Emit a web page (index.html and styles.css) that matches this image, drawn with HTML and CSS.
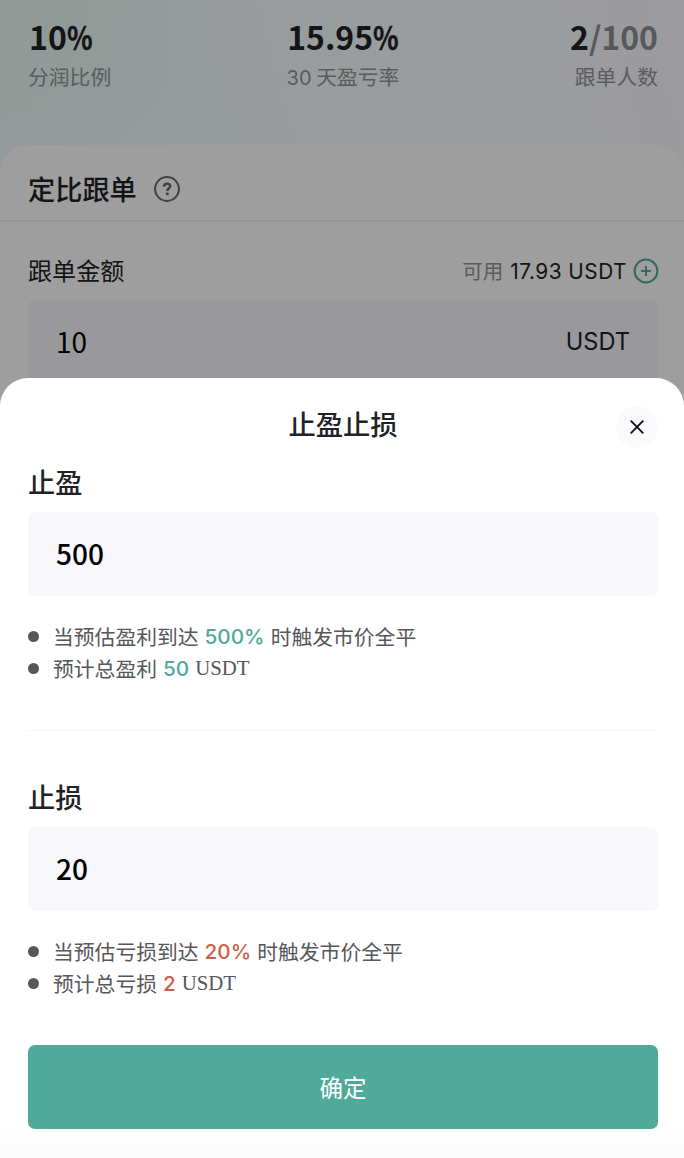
FILE: index.html
```html
<!DOCTYPE html>
<html lang="zh-CN">
<head>
<meta charset="utf-8">
<title>止盈止损</title>
<link rel="stylesheet" href="styles.css">
</head>
<body>
<main class="page">
  <header class="stats">
    <div class="stat"><div class="stat-value first">10<span class="pct">%</span></div><div class="stat-label">分润比例</div></div>
    <div class="stat stat-mid"><div class="stat-value">15.95<span class="pct">%</span></div><div class="stat-label"><span class="latin">30</span> 天盈亏率</div></div>
    <div class="stat stat-end"><div class="stat-value">2<span class="muted">/100</span></div><div class="stat-label">跟单人数</div></div>
  </header>
  <section class="card">
    <div class="card-head">
      <h2 class="card-title">定比跟单</h2>
      <svg class="help" viewBox="0 0 26 26" fill="none" stroke="currentColor">
        <circle cx="13" cy="13" r="11.9" stroke-width="2"/>
        <path d="M10 10.6c.1-1.9 1.3-2.9 3.1-2.9 1.9 0 3.1 1 3.1 2.6 0 2-2.9 2.1-2.9 4.7" stroke-width="2.5"/>
        <path d="M11.9 16.6h2.7v2.6h-2.7z" fill="currentColor" stroke="none"/>
      </svg>
    </div>
    <div class="amount-row">
      <div class="amount-label">跟单金额</div>
      <div class="available">
        <span class="available-label">可用</span>
        <span class="available-value">17.93 USDT</span>
        <svg class="plus" viewBox="0 0 26 26" fill="none" stroke="currentColor" stroke-width="2">
          <circle cx="13" cy="13" r="11.4"/><path d="M8 13h10M13 8v10"/>
        </svg>
      </div>
    </div>
    <div class="field amount-field"><span class="amount-value">10</span><span class="unit">USDT</span></div>
  </section>
</main>
<div class="overlay"></div>
<section class="sheet">
  <div class="sheet-head">
    <h1 class="sheet-title">止盈止损</h1>
    <button class="close" aria-label="关闭">
      <svg viewBox="0 0 14 14" fill="none" stroke="#111214" stroke-width="1.9"><path d="M.7.7l12.6 12.6M13.3.7.7 13.3"/></svg>
    </button>
  </div>
  <div class="block">
    <h2 class="block-title">止盈</h2>
    <div class="field value">500</div>
    <ul class="notes">
      <li>当预估盈利到达<b class="num up">500%</b>时触发市价全平</li>
      <li>预计总盈利<b class="num up">50</b><span class="serif">USDT</span></li>
    </ul>
  </div>
  <div class="divider"></div>
  <div class="block block-loss">
    <h2 class="block-title">止损</h2>
    <div class="field value">20</div>
    <ul class="notes">
      <li>当预估亏损到达<b class="num down">20%</b>时触发市价全平</li>
      <li>预计总亏损<b class="num down">2</b><span class="serif">USDT</span></li>
    </ul>
  </div>
  <button class="confirm">确定</button>
</section>
</body>
</html>
```
FILE: styles.css
```css
* { box-sizing: border-box; }
body {
  margin: 0;
  position: relative;
  width: 684px;
  height: 1158px;
  overflow: hidden;
  background: #fff;
  color: #202225;
  font-family: "Noto Sans CJK SC", sans-serif;
}
h1, h2, ul { margin: 0; padding: 0; }
h1, h2 { font-weight: 500; }
button { border: 0; padding: 0; font-family: inherit; }

.page {
  height: 430px;
  background: linear-gradient(75deg, #f0fbfc 0, #f4fcfd 40%, #f8fdff 75%, #fcfaff 100%);
}
.stats {
  display: grid;
  grid-template-columns: 1fr auto 1fr;
  height: 145px;
  padding: 17px 26px 0 28px;
  background: radial-gradient(circle at 0 0, rgba(228, 246, 238, 0.75), rgba(244, 252, 252, 0) 220px);
}
.stat-mid { text-align: center; }
.stat-end { text-align: right; }
.stat-value {
  height: 39px;
  line-height: 38px;
  font-size: 32px;
  font-weight: 700;
}
.first { padding-left: 1px; }
.pct {
  display: inline-block;
  transform: scaleX(0.83);
  transform-origin: left;
  margin-right: -5px;
  -webkit-text-stroke: 0.4px currentColor;
}
.muted { color: #8d8f93; }
.stat-label {
  height: 40px;
  line-height: 40px;
  font-size: 20.8px;
  color: #919599;
}
.latin { font-family: Inter, sans-serif; font-size: 20px; }

.card {
  height: 285px;
  background: #fff;
  border-radius: 28px 28px 0 0;
}
.card-head {
  display: flex;
  align-items: center;
  gap: 17px;
  height: 77px;
  padding: 13px 28px 0;
  border-bottom: 2px solid #f3f3f4;
}
.card-title { font-size: 27.2px; line-height: 40px; margin-top: -2px; }
.help { width: 26px; height: 26px; color: #68696b; }
.amount-row {
  display: flex;
  justify-content: space-between;
  align-items: center;
  height: 78px;
  padding: 20px 25px 0 28px;
}
.amount-label { font-size: 24.1px; line-height: 36px; margin-top: -2px; }
.available { display: flex; align-items: center; font-size: 20.5px; line-height: 34px; }
.available-label { color: #929397; margin: -2px 7px 0 0; }
.available-value { font-family: Inter, sans-serif; font-size: 20.8px; letter-spacing: 0.5px; margin: 1px 6px 0 0; }
.plus { width: 26px; height: 26px; color: #4faa99; }
.field {
  display: flex;
  align-items: center;
  height: 84px;
  margin: 0 26px 0 28px;
  padding: 0 29px 2px 28px;
  border-radius: 7px;
  background: #f7f7fc;
}
.amount-value { font-size: 28px; color: #000; }
.amount-field { justify-content: space-between; padding-right: 28px; }
.unit { font-family: Inter, sans-serif; font-size: 23.6px; margin-top: 1px; }

.overlay { position: absolute; inset: 0; background: rgba(0, 0, 0, 0.38); }

.sheet {
  position: absolute;
  left: 0;
  right: 0;
  top: 378px;
  bottom: 0;
  border-radius: 28px 28px 0 0;
  background: linear-gradient(#fff 0 96%, #fbfbfb 100%);
}
.sheet-head {
  display: grid;
  grid-template-columns: 42px 1fr 42px;
  height: 84px;
  padding: 28px 26px 0 28px;
}
.sheet-title {
  grid-column: 2;
  margin-top: -5px;
  text-align: center;
  font-size: 27.3px;
  line-height: 44px;
}
.close {
  display: grid;
  place-items: center;
  width: 42px;
  height: 42px;
  border-radius: 50%;
  background: #fafafc;
}
.close svg { width: 14px; height: 14px; }
.block { height: 268px; }
.block-title {
  height: 50px;
  padding-left: 28px;
  font-size: 27.2px;
  line-height: 38px;
}
.value { font-size: 28px; font-weight: 500; color: #000; }
.notes {
  padding: 24px 0 0 28px;
  list-style: none;
  font-size: 20.8px;
  color: #56575a;
}
.notes li { display: flex; align-items: center; height: 32px; white-space: nowrap; }
.notes li::before {
  content: "";
  width: 11px;
  height: 11px;
  margin-right: 14px;
  border-radius: 50%;
  background: #56575a;
}
.num { margin: 0 6px; font-family: Inter, sans-serif; font-weight: 500; font-size: 20.7px; }
.up { color: #4faa99; }
.down { color: #cf5f49; }
.serif { font-family: "Liberation Serif", serif; }
.divider { height: 1px; margin: 0 26px 0 28px; background: #f5f5f7; }
.block-loss { height: 314px; padding-top: 46px; }
.confirm {
  display: block;
  width: 630px;
  height: 84px;
  margin-left: 28px;
  padding-bottom: 1px;
  border-radius: 7px;
  background: #50aa99;
  color: #fff;
  font-size: 23.5px;
  font-weight: 400;
}
```
